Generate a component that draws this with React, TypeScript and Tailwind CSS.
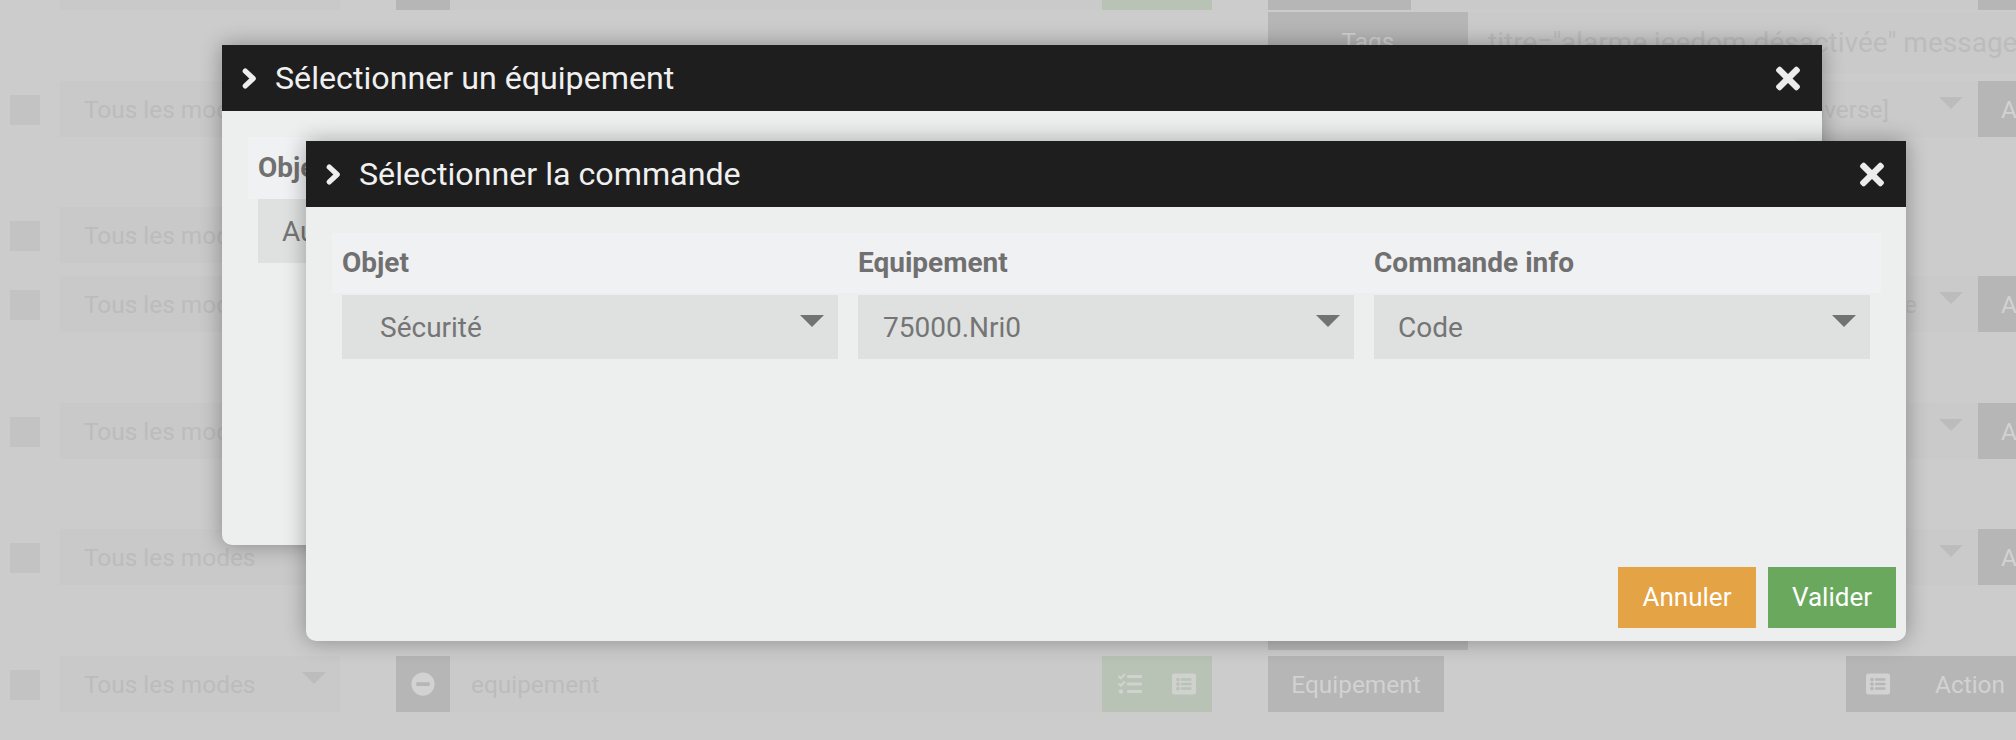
import React from 'react';
import { FaTimes, FaTasks, FaListAlt, FaMinusCircle } from 'react-icons/fa';

const Caret: React.FC<{ className: string }> = ({ className }) => (
  <svg viewBox="0 0 24 12" className={className} fill="currentColor">
    <polygon points="0,0 24,0 12,12" />
  </svg>
);

const Chevron = () => (
  <svg viewBox="0 0 14 20" className="w-[15px] h-[21px] shrink-0">
    <polyline points="3,3 10.5,10 3,17" fill="none" stroke="#eeeeee" strokeWidth="5" strokeLinecap="round" strokeLinejoin="round" />
  </svg>
);

const ModeSelect: React.FC<{ caret?: boolean }> = ({ caret }) => (
  <>
    <div className="w-[30px] h-[30px] ml-[10px] mt-[2px] bg-[#c3c3c3] shrink-0" />
    <div className="w-[280px] ml-[20px] h-full bg-[#c9c9c9] flex items-center pl-[24px] pr-[14px] text-[#bcbcbc] text-[24.4px] shrink-0">
      <span className="flex-1 pt-[2px]">Tous les modes</span>
      {caret && <Caret className="w-[24px] h-[12px] text-[#bcbcbc] -mt-[12px]" />}
    </div>
  </>
);

const RightSelect: React.FC<{ label?: string; clip?: boolean }> = ({ label, clip }) => (
  <>
    <div className="flex-1" />
    <div className="w-[300px] h-full bg-[#cacaca] flex items-center justify-end overflow-hidden shrink-0">
      {label && (
        <div className={`text-[24.4px] text-[#bcbcbc] whitespace-nowrap flex justify-end pt-[2px] ${clip ? 'overflow-hidden w-[10px] mr-[22px]' : 'mr-[50px]'}`}>
          {label}
        </div>
      )}
      <Caret className="w-[24px] h-[12px] text-[#bcbcbc] -mt-[12px] mr-[15px] shrink-0" />
    </div>
    <div className="w-[38px] h-full bg-[#b6b6b6] text-[#d2d2d2] text-[24.4px] flex items-center pl-[23px] pt-[2px] overflow-hidden whitespace-nowrap shrink-0">A</div>
  </>
);

const Row: React.FC<{ className?: string; children: React.ReactNode }> = ({ className = '', children }) => (
  <div className={`h-[56px] flex items-center ${className}`}>{children}</div>
);

const Field: React.FC<{ value: string; indent: string }> = ({ value, indent }) => (
  <div className={`h-[64px] bg-[#dfe1e0] flex items-center pr-[14px] ${indent}`}>
    <span className="flex-1 text-[28px] text-[#757575] pt-[1px]">{value}</span>
    <Caret className="w-[24px] h-[12px] text-[#727272] -mt-[12px]" />
  </div>
);

const Modal: React.FC<{ title: string; className: string; children: React.ReactNode }> = ({ title, className, children }) => (
  <div className={`absolute bg-[#edefee] rounded-b-[10px] shadow-[0_0_22px_rgba(0,0,0,0.33)] flex flex-col ${className}`}>
    <div className="h-[66px] bg-[#1e1e1e] flex items-center pl-[20px] pr-[22px] text-[#f0f0f0] shrink-0">
      <Chevron />
      <span className="ml-[18px] flex-1 text-[32.2px]">{title}</span>
      <FaTimes className="w-[24px] h-[35px] text-[#ececec]" />
    </div>
    {children}
  </div>
);

export default function App() {
  return (
    <div className="relative w-[2016px] h-[740px] overflow-hidden bg-[#cccccc] font-['Roboto',sans-serif]">
      <div className="flex flex-col">
        {/* page underneath the overlay */}
        <div className="h-[10px] flex">
          <div className="w-[280px] ml-[60px] bg-[#c9c9c9]" />
          <div className="w-[54px] ml-[56px] bg-[#b6b6b6]" />
          <div className="w-[652px] bg-[#cacaca]" />
          <div className="w-[110px] bg-[#b8c3b6]" />
          <div className="w-[143px] ml-[56px] bg-[#b6b6b6]" />
          <div className="w-[567px] bg-[#cacaca]" />
          <div className="w-[38px] bg-[#b6b6b6]" />
        </div>
        <div className="h-[61px] mt-[2px] pl-[1268px] flex">
          <div className="w-[200px] bg-[#b6b6b6] text-[#d2d2d2] text-[24.4px] flex items-center justify-center">Tags</div>
          <div className="flex-1 bg-[#cacaca] text-[#bcbcbc] text-[28px] flex items-center pl-[20px] whitespace-nowrap overflow-hidden">
            titre="alarme jeedom désactivée" message
          </div>
        </div>
        <Row className="mt-[8px]">
          <ModeSelect />
          <RightSelect label="[inverse]" />
        </Row>
        <Row className="mt-[70px]">
          <ModeSelect />
        </Row>
        <Row className="mt-[13px]">
          <ModeSelect />
          <RightSelect label="re" clip />
        </Row>
        <Row className="mt-[71px]">
          <ModeSelect />
          <RightSelect />
        </Row>
        <Row className="mt-[70px]">
          <ModeSelect />
          <RightSelect />
        </Row>
        <div className="h-[61px] mt-[4px] ml-[1268px] w-[200px] bg-[#b6b6b6]" />
        <Row className="mt-[6px]">
          <ModeSelect caret />
          <div className="w-[54px] h-full ml-[56px] bg-[#b6b6b6] flex items-center justify-center shrink-0">
            <FaMinusCircle className="w-[24px] h-[24px] text-[#d2d2d2]" />
          </div>
          <div className="w-[652px] h-full bg-[#cacaca] flex items-center pl-[21px] pt-[2px] text-[#bcbcbc] text-[24.4px] shrink-0">equipement</div>
          <div className="w-[110px] h-full bg-[#b8c3b6] flex items-center pl-[16px] gap-[30px] text-[#cfd2ce] shrink-0">
            <FaTasks className="w-[24px] h-[24px]" />
            <FaListAlt className="w-[24px] h-[24px]" />
          </div>
          <div className="w-[176px] h-full ml-[56px] pt-[2px] bg-[#b6b6b6] text-[#d2d2d2] text-[24.4px] flex items-center justify-center shrink-0">Equipement</div>
          <div className="w-[170px] h-full ml-[402px] bg-[#b6b6b6] text-[#d2d2d2] text-[24.4px] flex items-center pl-[20px] shrink-0">
            <FaListAlt className="w-[24px] h-[24px]" />
            <span className="ml-[45px] pt-[2px]">Action</span>
          </div>
        </Row>
      </div>

      <Modal title="Sélectionner un équipement" className="left-[222px] top-[45px] w-[1600px] h-[500px]">
        <div className="mt-[26px] mx-[26px]">
          <div className="h-[62px] bg-[#f0f1f3] flex items-center pl-[10px] text-[28px] font-bold text-[#707070]">Objet</div>
          <div className="ml-[10px] w-[496px]">
            <Field value="Aucun" indent="pl-[24px]" />
          </div>
        </div>
      </Modal>

      <Modal title="Sélectionner la commande" className="left-[306px] top-[141px] w-[1600px] h-[500px]">
        <div className="mt-[26px] ml-[26px] w-[1549px]">
          <div className="h-[60px] bg-[#f0f1f3] grid grid-cols-[496px_496px_496px] gap-x-[20px] pl-[10px] items-center text-[28px] font-bold text-[#707070]">
            <span>Objet</span>
            <span>Equipement</span>
            <span>Commande info</span>
          </div>
          <div className="mt-[2px] grid grid-cols-[496px_496px_496px] gap-x-[20px] pl-[10px]">
            <Field value="Sécurité" indent="pl-[38px]" />
            <Field value="75000.Nri0" indent="pl-[25px]" />
            <Field value="Code" indent="pl-[24px]" />
          </div>
        </div>
        <div className="flex-1 flex items-end justify-end gap-[12px] pr-[10px] pb-[13px]">
          <button className="w-[138px] h-[61px] bg-[#e4a345] text-white text-[26px]">Annuler</button>
          <button className="w-[128px] h-[61px] bg-[#6aa95d] text-white text-[26px]">Valider</button>
        </div>
      </Modal>
    </div>
  );
}
